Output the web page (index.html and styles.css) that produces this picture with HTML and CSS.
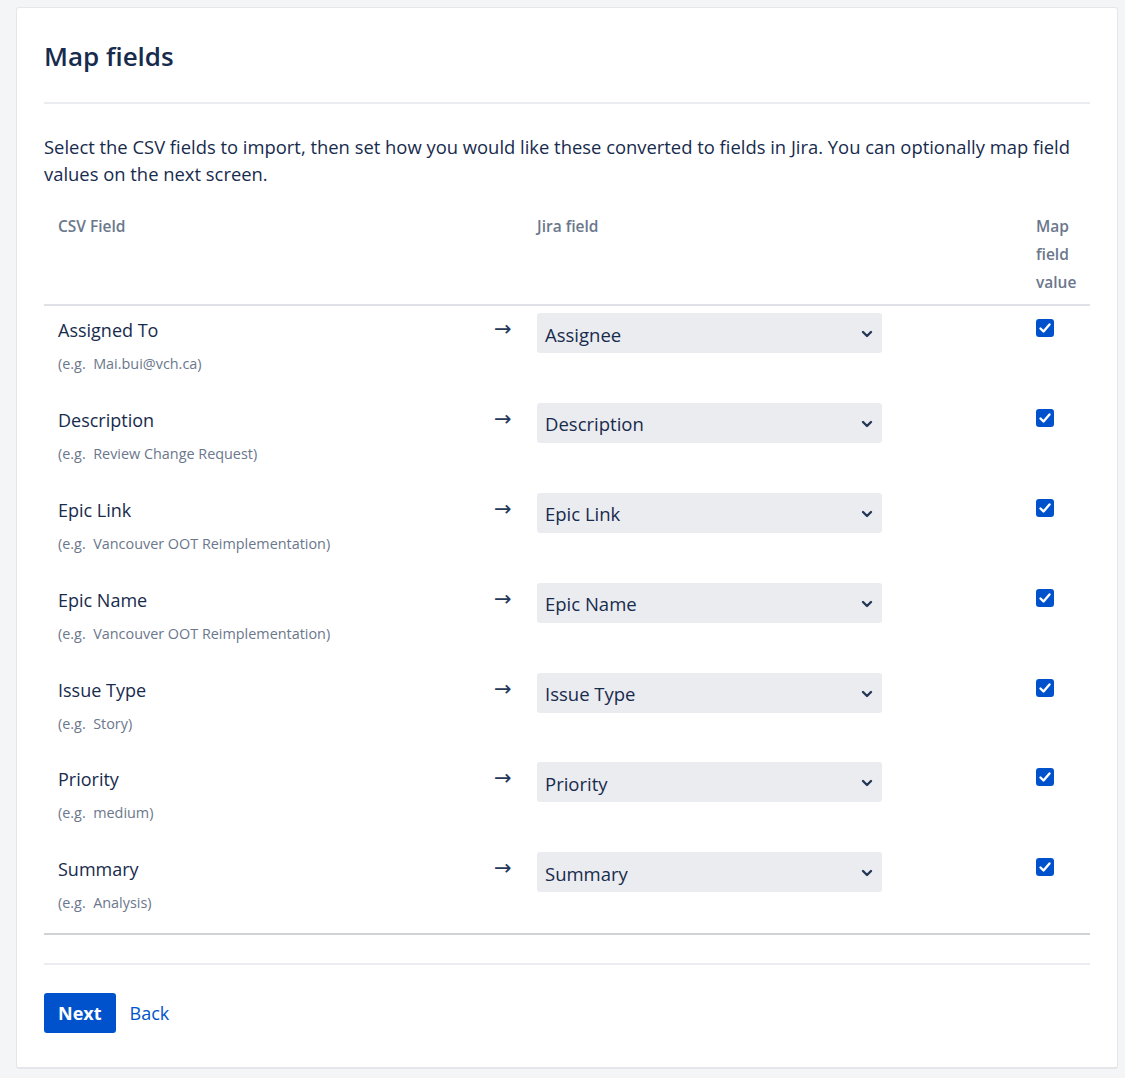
FILE: index.html
```html
<!DOCTYPE html>
<html lang="en">
<head>
    <meta charset="UTF-8">
    <meta name="viewport" content="width=device-width, initial-scale=1.0">
    <title>Map fields</title>
    <link rel="stylesheet" href="styles.css">
</head>
<body>
    <main class="card">
        <h1 class="title">Map fields</h1>
        <p class="intro">Select the CSV fields to import, then set how you would like these converted to fields in Jira. You can optionally map field values on the next screen.</p>

        <div class="mapping">
            <div class="head">
                <div class="col-csv">CSV Field</div>
                <div class="col-arrow"></div>
                <div class="col-jira">Jira field</div>
                <div class="col-map">Map field value</div>
            </div>

            <div class="row">
                <div class="col-csv">
                    <div class="name">Assigned To</div>
                    <div class="hint">(e.g.&nbsp; Mai.bui@vch.ca)</div>
                </div>
                <div class="col-arrow">&rarr;</div>
                <div class="col-jira">
                    <div class="select"><span>Assignee</span><svg viewBox="0 0 12 8" width="12" height="8"><path d="M2 2l4 4 4-4" fill="none" stroke="#253858" stroke-width="2.4" stroke-linecap="round" stroke-linejoin="round"/></svg></div>
                </div>
                <div class="col-map"><span class="check"><svg viewBox="0 0 18 18" width="18" height="18"><path d="M4.5 9.5l3 3 6-7" fill="none" stroke="#fff" stroke-width="2.4" stroke-linecap="round" stroke-linejoin="round"/></svg></span></div>
            </div>

            <div class="row">
                <div class="col-csv">
                    <div class="name">Description</div>
                    <div class="hint">(e.g.&nbsp; Review Change Request)</div>
                </div>
                <div class="col-arrow">&rarr;</div>
                <div class="col-jira">
                    <div class="select"><span>Description</span><svg viewBox="0 0 12 8" width="12" height="8"><path d="M2 2l4 4 4-4" fill="none" stroke="#253858" stroke-width="2.4" stroke-linecap="round" stroke-linejoin="round"/></svg></div>
                </div>
                <div class="col-map"><span class="check"><svg viewBox="0 0 18 18" width="18" height="18"><path d="M4.5 9.5l3 3 6-7" fill="none" stroke="#fff" stroke-width="2.4" stroke-linecap="round" stroke-linejoin="round"/></svg></span></div>
            </div>

            <div class="row">
                <div class="col-csv">
                    <div class="name">Epic Link</div>
                    <div class="hint">(e.g.&nbsp; Vancouver OOT Reimplementation)</div>
                </div>
                <div class="col-arrow">&rarr;</div>
                <div class="col-jira">
                    <div class="select"><span>Epic Link</span><svg viewBox="0 0 12 8" width="12" height="8"><path d="M2 2l4 4 4-4" fill="none" stroke="#253858" stroke-width="2.4" stroke-linecap="round" stroke-linejoin="round"/></svg></div>
                </div>
                <div class="col-map"><span class="check"><svg viewBox="0 0 18 18" width="18" height="18"><path d="M4.5 9.5l3 3 6-7" fill="none" stroke="#fff" stroke-width="2.4" stroke-linecap="round" stroke-linejoin="round"/></svg></span></div>
            </div>

            <div class="row">
                <div class="col-csv">
                    <div class="name">Epic Name</div>
                    <div class="hint">(e.g.&nbsp; Vancouver OOT Reimplementation)</div>
                </div>
                <div class="col-arrow">&rarr;</div>
                <div class="col-jira">
                    <div class="select"><span>Epic Name</span><svg viewBox="0 0 12 8" width="12" height="8"><path d="M2 2l4 4 4-4" fill="none" stroke="#253858" stroke-width="2.4" stroke-linecap="round" stroke-linejoin="round"/></svg></div>
                </div>
                <div class="col-map"><span class="check"><svg viewBox="0 0 18 18" width="18" height="18"><path d="M4.5 9.5l3 3 6-7" fill="none" stroke="#fff" stroke-width="2.4" stroke-linecap="round" stroke-linejoin="round"/></svg></span></div>
            </div>

            <div class="row">
                <div class="col-csv">
                    <div class="name">Issue Type</div>
                    <div class="hint">(e.g.&nbsp; Story)</div>
                </div>
                <div class="col-arrow">&rarr;</div>
                <div class="col-jira">
                    <div class="select"><span>Issue Type</span><svg viewBox="0 0 12 8" width="12" height="8"><path d="M2 2l4 4 4-4" fill="none" stroke="#253858" stroke-width="2.4" stroke-linecap="round" stroke-linejoin="round"/></svg></div>
                </div>
                <div class="col-map"><span class="check"><svg viewBox="0 0 18 18" width="18" height="18"><path d="M4.5 9.5l3 3 6-7" fill="none" stroke="#fff" stroke-width="2.4" stroke-linecap="round" stroke-linejoin="round"/></svg></span></div>
            </div>

            <div class="row">
                <div class="col-csv">
                    <div class="name">Priority</div>
                    <div class="hint">(e.g.&nbsp; medium)</div>
                </div>
                <div class="col-arrow">&rarr;</div>
                <div class="col-jira">
                    <div class="select"><span>Priority</span><svg viewBox="0 0 12 8" width="12" height="8"><path d="M2 2l4 4 4-4" fill="none" stroke="#253858" stroke-width="2.4" stroke-linecap="round" stroke-linejoin="round"/></svg></div>
                </div>
                <div class="col-map"><span class="check"><svg viewBox="0 0 18 18" width="18" height="18"><path d="M4.5 9.5l3 3 6-7" fill="none" stroke="#fff" stroke-width="2.4" stroke-linecap="round" stroke-linejoin="round"/></svg></span></div>
            </div>

            <div class="row">
                <div class="col-csv">
                    <div class="name">Summary</div>
                    <div class="hint">(e.g.&nbsp; Analysis)</div>
                </div>
                <div class="col-arrow">&rarr;</div>
                <div class="col-jira">
                    <div class="select"><span>Summary</span><svg viewBox="0 0 12 8" width="12" height="8"><path d="M2 2l4 4 4-4" fill="none" stroke="#253858" stroke-width="2.4" stroke-linecap="round" stroke-linejoin="round"/></svg></div>
                </div>
                <div class="col-map"><span class="check"><svg viewBox="0 0 18 18" width="18" height="18"><path d="M4.5 9.5l3 3 6-7" fill="none" stroke="#fff" stroke-width="2.4" stroke-linecap="round" stroke-linejoin="round"/></svg></span></div>
            </div>
        </div>

        <div class="actions">
            <button class="btn" type="button">Next</button>
            <a class="link" href="#">Back</a>
        </div>
    </main>
</body>
</html>
```

FILE: styles.css
```css
:root {
    --text: #172b4d;
    --subtle: #6b778c;
    --blue: #0052cc;
    --line: #ebecf0;
}

* {
    box-sizing: border-box;
}

body {
    margin: 0;
    padding: 7px 7px 9px 16px;
    background-color: #f4f5f7;
    font-family: "Open Sans", "Noto Sans", sans-serif;
    color: var(--text);
}

.card {
    width: 1102px;
    height: 1062px;
    background-color: #fff;
    border: 1px solid #e4e6ea;
    border-bottom-width: 2px;
    border-radius: 3px;
    padding: 0 27px;
}

.title {
    margin: 0;
    padding: 33px 0 31px;
    font-size: 26px;
    line-height: 30px;
    font-weight: 600;
    border-bottom: 2px solid var(--line);
}

.intro {
    margin: 0;
    padding-top: 29px;
    font-size: 18.4px;
    line-height: 27px;
}

.mapping {
    margin-top: 25px;
}

.head,
.row {
    display: grid;
    grid-template-columns: 441px 52px 485px 68px;
}

.head {
    padding-bottom: 8px;
    border-bottom: 2px solid #dfe1e6;
    font-size: 15.5px;
    line-height: 28px;
    font-weight: 600;
    color: var(--subtle);
}

.col-csv {
    padding-left: 14px;
}

.col-map {
    padding-left: 14px;
    padding-right: 12px;
}

.row {
    height: 89.9px;
}

.row:last-child {
    border-bottom: 2px solid #cfd2d7;
}

.row .col-csv {
    padding-top: 12px;
}

.name {
    font-size: 18px;
    line-height: 24px;
}

.hint {
    margin-top: 12px;
    font-size: 14.4px;
    line-height: 20px;
    color: var(--subtle);
}

.row .col-arrow {
    padding: 8px 0 0 9px;
    font-family: "DejaVu Sans", sans-serif;
    font-size: 21px;
    line-height: 30px;
    color: #253858;
}

.row .col-jira {
    padding-top: 7px;
}

.select {
    display: flex;
    align-items: center;
    justify-content: space-between;
    width: 345px;
    height: 40px;
    padding: 2px 9px 0 8px;
    background-color: #ebecf0;
    border-radius: 3px;
    font-size: 18.5px;
}

.row .col-map {
    padding-top: 13px;
}

.check {
    display: flex;
    width: 18px;
    height: 18px;
    background-color: var(--blue);
    border-radius: 3px;
}

.actions {
    margin-top: 28px;
    padding-top: 28px;
    border-top: 2px solid var(--line);
    display: flex;
    align-items: center;
    gap: 14px;
}

.btn {
    height: 40px;
    padding: 0 14px;
    border: none;
    border-radius: 3px;
    background-color: var(--blue);
    color: #fff;
    font-family: inherit;
    font-size: 18px;
    font-weight: 700;
}

.link {
    color: var(--blue);
    text-decoration: none;
    font-size: 18px;
}
```
